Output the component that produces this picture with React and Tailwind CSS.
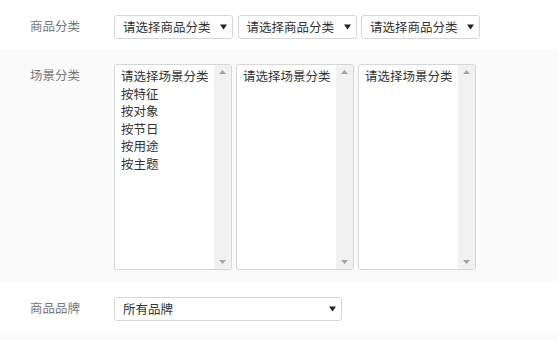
const font = { fontFamily: '"Noto Sans CJK SC", "Noto Sans", sans-serif' };

const Caret = () => (
  <svg width="7" height="6" viewBox="0 0 7 6" className="shrink-0">
    <path d="M0 0.5 H7 L3.5 5.5 Z" fill="#222" />
  </svg>
);

const Select = ({ text, width }) => (
  <div
    className={`${width} h-[24px] flex items-center justify-between border border-[#d6d6d6] rounded-[3px] bg-white pl-[8px] pr-[5px] text-[12.5px] leading-[22px] text-[#333]`}
  >
    <span>{text}</span>
    <Caret />
  </div>
);

const ListBox = ({ items }) => (
  <div className="w-[118px] h-[206px] flex border border-[#d6d6d6] rounded-[3px] bg-white overflow-hidden">
    <div className="flex-1 pl-[6px] pt-[2px] text-[12.5px] leading-[17.5px] text-[#333]">
      {items.map((item) => (
        <div key={item}>{item}</div>
      ))}
    </div>
    <div className="w-[17px] bg-[#f1f1f1] flex flex-col items-center justify-between pt-[5px] pb-[5px]">
      <svg width="7" height="4" viewBox="0 0 7 4">
        <path d="M0 4 H7 L3.5 0 Z" fill="#a3a3a3" />
      </svg>
      <svg width="7" height="4" viewBox="0 0 7 4">
        <path d="M0 0 H7 L3.5 4 Z" fill="#a3a3a3" />
      </svg>
    </div>
  </div>
);

const Label = ({ children }) => (
  <div className="w-[84px] shrink-0 text-[12.5px] leading-[22px] text-[#777]">{children}</div>
);

export default function App() {
  const scenes = ["请选择场景分类", "按特征", "按对象", "按节日", "按用途", "按主题"];

  return (
    <div className="w-[558px] h-[340px] bg-[#fafafa] overflow-hidden" style={font}>
      {/* 商品分类 */}
      <div className="h-[50px] bg-white flex items-start pl-[30px] pt-[15px]">
        <Label>商品分类</Label>
        <div className="flex gap-[4.5px]">
          <Select text="请选择商品分类" width="w-[119px]" />
          <Select text="请选择商品分类" width="w-[119px]" />
          <Select text="请选择商品分类" width="w-[119px]" />
        </div>
      </div>

      {/* 场景分类 */}
      <div className="h-[231px] bg-[#fafafa] flex items-start pl-[30px] pt-[14px]">
        <Label>场景分类</Label>
        <div className="flex gap-[4px]">
          <ListBox items={scenes} />
          <ListBox items={["请选择场景分类"]} />
          <ListBox items={["请选择场景分类"]} />
        </div>
      </div>

      {/* 商品品牌 */}
      <div className="h-[52px] bg-white flex items-start pl-[30px] pt-[16px]">
        <Label>商品品牌</Label>
        <Select text="所有品牌" width="w-[228px]" />
      </div>
    </div>
  );
}
